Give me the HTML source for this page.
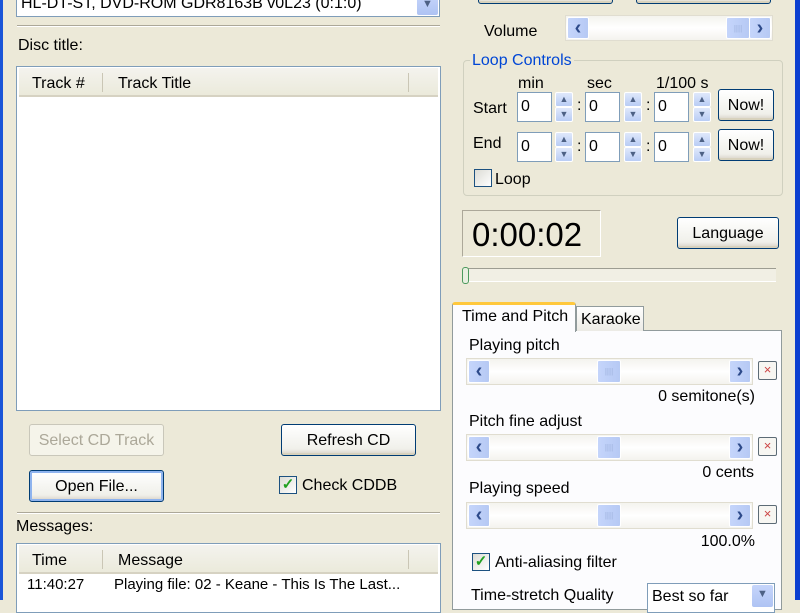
<!DOCTYPE html>
<html><head><meta charset="utf-8"><style>
*{box-sizing:border-box;margin:0;padding:0}
body{width:800px;height:600px;overflow:hidden;background:#ECE9D8;font-family:"Liberation Sans",sans-serif;font-size:16px;color:#000;position:relative}
.a{position:absolute}
.t{position:absolute;white-space:nowrap;line-height:18px}
.btn{position:absolute;border:1px solid #003C74;border-radius:3px;background:linear-gradient(#fff,#f0f0ea 80%,#d6d0c5);text-align:center;font-size:16px;box-shadow:inset 0 -2px 0 #d8d2bd}
.inp{position:absolute;background:#fff;border:1px solid #7F9DB9;padding-left:3px;line-height:28px}
.spin{position:absolute;width:18px;background:#ECE9D8}
.spin div{height:50%;background:linear-gradient(#dfe8fb,#b9cdf5);border:1px solid #fff;border-radius:2px;color:#4d6185;font-size:9px;text-align:center;line-height:12px}
.sb{position:absolute;background:linear-gradient(#f4f3ee,#fff 50%,#f4f3ee);border:1px solid #e0ddd0}
.sb .l,.sb .r,.sb .m{position:absolute;top:1px;bottom:1px;background:linear-gradient(90deg,#c5d5fb,#b6c9f4);border:1px solid #fff;border-radius:2px;color:#2d4a8a;font-weight:bold;text-align:center;font-size:20px;line-height:20px}
.sb .l{left:1px;width:22px}.sb .r{right:1px;width:22px}
.sb .m{width:24px;font-size:8px;color:#9fb3de;font-weight:normal;line-height:21px}
.xb{position:absolute;width:19px;height:19px;border:1px solid #5c6b76;border-radius:2px;background:#f7f6f2;color:#c44;font-size:13px;text-align:center;line-height:16px}
.cb{position:absolute;width:18px;height:18px;border:1px solid #1c5180;background:linear-gradient(135deg,#dcdcd5,#fff);color:#21a121;font-size:15px;line-height:16px;text-align:center;font-weight:bold}
.hdr{position:absolute;left:2px;right:2px;height:29px;background:linear-gradient(#f4f3ee,#ebeadb);border-bottom:2px solid #d6d2c2}
</style></head><body>
<div class="a" style="left:0;top:0;width:3px;height:600px;background:#1a55d8"></div>
<div class="a" style="left:795px;top:0;width:5px;height:600px;background:#0b3fd0"></div>

<div class="a" style="left:16px;top:-6px;width:424px;height:23px;background:#fff;border:1px solid #7F9DB9"></div>
<div class="t" style="left:21px;top:-5px;">HL-DT-ST, DVD-ROM GDR8163B v0L23 (0:1:0)</div>
<div class="a" style="left:417px;top:-5px;width:21px;height:20px;background:linear-gradient(#c6d5fb,#aec3f3);border-radius:2px;color:#4d6185;font-size:11px;text-align:center;line-height:18px">▼</div>
<div class="a" style="left:17px;top:25px;width:423px;height:2px;border-top:1px solid #aca899;border-bottom:1px solid #fff"></div>
<div class="t" style="left:18px;top:37px">Disc title:</div>

<div class="a" style="left:16px;top:66px;width:425px;height:345px;background:#fff;border:1px solid #7F9DB9">
<div class="hdr" style="top:1px"></div>
<div class="t" style="left:15px;top:8px">Track #</div>
<div class="a" style="left:85px;top:6px;width:1px;height:19px;background:#cac6b5"></div>
<div class="t" style="left:101px;top:8px">Track Title</div>
<div class="a" style="left:391px;top:6px;width:1px;height:19px;background:#cac6b5"></div>
</div>

<div class="btn" style="left:29px;top:424px;width:135px;height:32px;line-height:31px;color:#aca899;border-color:#c9c7ba;box-shadow:none;background:#f5f4ea">Select CD Track</div>
<div class="btn" style="left:281px;top:424px;width:135px;height:32px;line-height:31px">Refresh CD</div>
<div class="btn" style="left:29px;top:470px;width:135px;height:32px;line-height:31px;box-shadow:inset 0 0 0 2px #8eb3ee">Open File...</div>
<div class="cb" style="left:279px;top:476px">✓</div>
<div class="t" style="left:302px;top:477px">Check CDDB</div>
<div class="a" style="left:17px;top:512px;width:423px;height:2px;border-top:1px solid #aca899;border-bottom:1px solid #fff"></div>
<div class="t" style="left:16px;top:518px">Messages:</div>
<div class="a" style="left:16px;top:543px;width:425px;height:70px;background:#fff;border:1px solid #7F9DB9">
<div class="hdr" style="top:1px"></div>
<div class="t" style="left:15px;top:8px">Time</div>
<div class="a" style="left:85px;top:6px;width:1px;height:19px;background:#cac6b5"></div>
<div class="t" style="left:101px;top:8px">Message</div>
<div class="a" style="left:391px;top:6px;width:1px;height:19px;background:#cac6b5"></div>
<div class="t" style="left:10px;top:32px;font-size:15px">11:40:27</div>
<div class="t" style="left:97px;top:32px;font-size:15px">Playing file: 02 - Keane - This Is The Last...</div>
</div>

<div class="btn" style="left:478px;top:-20px;width:135px;height:24px"></div>
<div class="btn" style="left:636px;top:-20px;width:135px;height:24px"></div>
<div class="t" style="left:484px;top:23px">Volume</div>
<div class="sb" style="left:565px;top:15px;width:208px;height:26px"><div class="l">‹</div><div class="m" style="left:160px">||||</div><div class="r">›</div></div>

<div class="a" style="left:463px;top:60px;width:320px;height:136px;border:1px solid #d0d0bf;border-radius:4px"></div>
<div class="t" style="left:470px;top:52px;background:#ECE9D8;color:#0046d5;padding:0 2px">Loop Controls</div>
<div class="t" style="left:518px;top:75px">min</div>
<div class="t" style="left:587px;top:75px">sec</div>
<div class="t" style="left:656px;top:75px">1/100 s</div>
<div class="t" style="left:473px;top:100px">Start</div>
<div class="t" style="left:473px;top:135px">End</div>
<div class="inp" style="left:517px;top:92px;width:35px;height:30px">0</div>
<div class="spin" style="left:555px;top:92px;height:30px"><div>▲</div><div>▼</div></div>
<div class="t" style="left:577px;top:97px">:</div>
<div class="inp" style="left:585px;top:92px;width:35px;height:30px">0</div>
<div class="spin" style="left:624px;top:92px;height:30px"><div>▲</div><div>▼</div></div>
<div class="t" style="left:646px;top:97px">:</div>
<div class="inp" style="left:654px;top:92px;width:35px;height:30px">0</div>
<div class="spin" style="left:693px;top:92px;height:30px"><div>▲</div><div>▼</div></div>
<div class="btn" style="left:718px;top:89px;width:56px;height:32px;line-height:31px">Now!</div>
<div class="inp" style="left:517px;top:132px;width:35px;height:30px">0</div>
<div class="spin" style="left:555px;top:132px;height:30px"><div>▲</div><div>▼</div></div>
<div class="t" style="left:577px;top:138px">:</div>
<div class="inp" style="left:585px;top:132px;width:35px;height:30px">0</div>
<div class="spin" style="left:624px;top:132px;height:30px"><div>▲</div><div>▼</div></div>
<div class="t" style="left:646px;top:138px">:</div>
<div class="inp" style="left:654px;top:132px;width:35px;height:30px">0</div>
<div class="spin" style="left:693px;top:132px;height:30px"><div>▲</div><div>▼</div></div>
<div class="btn" style="left:718px;top:129px;width:56px;height:32px;line-height:31px">Now!</div>
<div class="cb" style="left:474px;top:169px"></div>
<div class="t" style="left:495px;top:171px">Loop</div>

<div class="a" style="left:462px;top:210px;width:139px;height:47px;border:1px solid #aca899;border-right-color:#fff;border-bottom-color:#fff;font-size:33px;line-height:47px;padding-left:9px">0:00:02</div>
<div class="btn" style="left:677px;top:217px;width:102px;height:32px;line-height:31px">Language</div>
<div class="a" style="left:463px;top:268px;width:313px;height:14px;border-top:1px solid #9d9d92;border-bottom:1px solid #fff;background:#f1efe4"></div>
<div class="a" style="left:462px;top:267px;width:7px;height:17px;border:1px solid #4c9a5d;border-radius:3px;background:#e8efe0"></div>

<div class="a" style="left:452px;top:330px;width:330px;height:280px;background:#fcfcfe;border:1px solid #919b9c"></div>
<div class="a" style="left:576px;top:306px;width:68px;height:25px;background:linear-gradient(#fff,#ecebe5);border:1px solid #919b9c;border-bottom:none"></div>
<div class="t" style="left:581px;top:311px">Karaoke</div>
<div class="a" style="left:452px;top:302px;width:124px;height:30px;background:#fcfcfe;border:1px solid #919b9c;border-bottom:none;border-top:3px solid #ffc83c;border-radius:3px 3px 0 0"></div>
<div class="t" style="left:462px;top:308px">Time and Pitch</div>

<div class="t" style="left:469px;top:337px">Playing pitch</div>
<div class="sb" style="left:466px;top:358px;width:287px;height:27px"><div class="l">‹</div><div class="m" style="left:130px">||||</div><div class="r">›</div></div>
<div class="xb" style="left:758px;top:361px">×</div>
<div class="t" style="left:755px;top:388px;transform:translateX(-100%)">0 semitone(s)</div>

<div class="t" style="left:469px;top:413px">Pitch fine adjust</div>
<div class="sb" style="left:466px;top:434px;width:287px;height:27px"><div class="l">‹</div><div class="m" style="left:130px">||||</div><div class="r">›</div></div>
<div class="xb" style="left:758px;top:437px">×</div>
<div class="t" style="left:754px;top:464px;transform:translateX(-100%)">0 cents</div>

<div class="t" style="left:469px;top:480px">Playing speed</div>
<div class="sb" style="left:466px;top:502px;width:287px;height:27px"><div class="l">‹</div><div class="m" style="left:130px">||||</div><div class="r">›</div></div>
<div class="xb" style="left:758px;top:505px">×</div>
<div class="t" style="left:755px;top:533px;transform:translateX(-100%)">100.0%</div>

<div class="cb" style="left:472px;top:553px">✓</div>
<div class="t" style="left:495px;top:554px">Anti-aliasing filter</div>
<div class="t" style="left:471px;top:587px">Time-stretch Quality</div>
<div class="a" style="left:647px;top:583px;width:128px;height:30px;background:#fff;border:1px solid #7F9DB9"></div>
<div class="t" style="left:652px;top:588px">Best so far</div>
<div class="a" style="left:752px;top:585px;width:21px;height:22px;background:linear-gradient(#c6d5fb,#aec3f3);border-radius:2px;color:#4d6185;font-size:11px;text-align:center;line-height:18px">▼</div>
</body></html>
